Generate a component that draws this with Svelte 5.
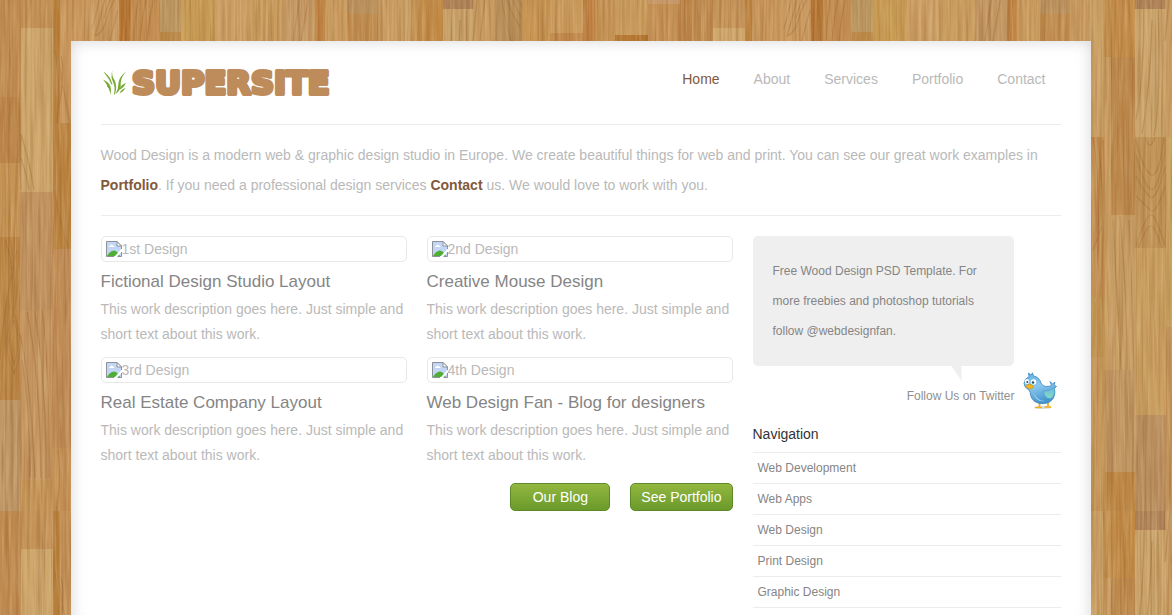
<script>
  const menu = ['Home', 'About', 'Services', 'Portfolio', 'Contact'];

  const works = [
    { alt: '1st Design', title: 'Fictional Design Studio Layout' },
    { alt: '2nd Design', title: 'Creative Mouse Design' },
    { alt: '3rd Design', title: 'Real Estate Company Layout' },
    { alt: '4th Design', title: 'Web Design Fan - Blog for designers' }
  ];

  const topics = ['Web Development', 'Web Apps', 'Web Design', 'Print Design', 'Graphic Design'];

  // Parquet tile, 692 x 521: [x, y, width, height, colour]
  const planks = [
    [0, 0, 21, 107, '#bf8a4f'], [0, 107, 20, 66, '#bb8346'], [0, 173, 20, 74, '#c59352'],
    [0, 247, 20, 163, '#b98341'], [0, 410, 20, 111, '#be9667'],
    [21, 0, 32, 38, '#c39156'], [21, 38, 32, 164, '#cea76c'], [20, 202, 32, 118, '#c1925f'],
    [20, 320, 32, 170, '#c69661'], [20, 490, 33, 31, '#c59455'],
    [53, 0, 7, 133, '#ba7f3a'], [60, 0, 28, 133, '#c8955a'], [53, 133, 35, 126, '#bb823e'],
    [52, 259, 36, 199, '#c08b55'], [53, 458, 35, 63, '#c48f54'],
    [88, 0, 31, 521, '#cb9b61'], [119, 0, 12, 521, '#b5722e'], [131, 0, 29, 521, '#c48d50'],
    [160, 0, 21, 42, '#bb9660'], [160, 42, 21, 479, '#b98644'],
    [181, 0, 34, 521, '#c99c53'], [215, 0, 32, 521, '#cfa167'], [247, 0, 36, 521, '#cb9d5f'],
    [283, 0, 32, 521, '#c59863'], [315, 0, 10, 521, '#bd7f3e'], [325, 0, 23, 521, '#ca9b5e'],
    [348, 0, 30, 24, '#b9905c'], [348, 24, 30, 497, '#bf8a4c'], [378, 0, 21, 521, '#ca9c62'],
    [399, 0, 12, 147, '#cba166'], [399, 147, 14, 160, '#c48f51'], [399, 307, 14, 60, '#c0914f'],
    [399, 367, 14, 154, '#c49558'], [413, 67, 6, 415, '#c99d63'],
    [411, 0, 8, 67, '#c3904e'], [419, 0, 24, 67, '#c28a45'], [419, 67, 24, 158, '#bc874a'],
    [413, 225, 30, 155, '#c89d64'], [413, 380, 30, 102, '#c19662'], [413, 482, 30, 39, '#bd8642'],
    [443, 0, 30, 19, '#ae8057'], [443, 19, 31, 128, '#cba56c'], [443, 147, 31, 111, '#c09256'],
    [443, 258, 31, 167, '#ca9e60'], [443, 425, 31, 96, '#ba8e60'],
    [474, 0, 21, 147, '#c89a60'], [474, 147, 21, 190, '#caa15f'], [474, 337, 21, 184, '#c39159'],
    [495, 0, 27, 521, '#b98e58'], [522, 0, 28, 521, '#c7934f'],
    [550, 0, 33, 43, '#cb9b5b'], [550, 43, 33, 478, '#c2884b'], [583, 0, 12, 521, '#bf8040'],
    [595, 0, 20, 521, '#c79556'], [615, 0, 33, 45, '#ca9c5c'], [615, 45, 33, 476, '#b5752f'],
    [648, 0, 32, 14, '#c99b6c'], [648, 14, 32, 507, '#c58f52'], [680, 0, 12, 521, '#bc8144']
  ];

  // Growth rings and streaks that show on single planks
  const rings = [
    'M101 0q-4 22-9 39M107 0q-6 26-12 46q8-3 11-15T118 3M113 0q-5 15-9 28M118 20q-5 18-8 31',
    'M140 0q-5 24-6 51M148 0q-6 26-8 51M156 0q-7 26-9 51',
    'M516 0q2 10 6 17M511 0q2 14 10 27M506 0q2 20 14 37M501 4q3 22 10 47',
    'M5 250q12 30 5 70M10 250q10 40-1 90M17 260q-14 60-17 110M19 290q-6 40-12 70M14 330q-8 22 0 44q8-22 0-44M14 324q-14 28 0 60q12-30 0-60',
    'M20 344q10 40 15 144M22 370q8 50 8 118M27 322q13 60 14 166M34 320q12 60 12 168M42 320q8 60 7 168',
    'M55 60q6 40 2 73M61 66q5 20-4 60M70 133q-10-50-12-70M54 200q6 34 14 57M58 460q4 30-2 61',
    'M21 200q-2-30 0-56q9 30 13 56M21 168q6 18 8 32',
    'M401 147q10 60 2 160M406 147q8 70 2 160M411 150q3 80-3 157M401 260q10-26 11-30',
    'M444 150q6 26 14 34t14-36M444 165q7 28 14 34t15-38M444 186q8 16 14 21t15-30M444 206q8 8 14 14t15-24M444 256q9-28 14-31t15 31M446 258q8-20 12-22t12 22M453 147q5 16 10 0',
    'M421 230q4 70 8 150M428 226q7 80 7 154M437 230q3 70 5 150',
    'M452 19q-1 80-8 110M460 30q-2 70-10 114M466 20q3 90-4 126',
    'M301 0l-8 51M310 0l-9 51M478 0l-5 51M486 0l-6 51'
  ];
</script>

<svg class="wood" aria-hidden="true">
  <defs>
    <filter id="grain" x="0" y="0" width="100%" height="100%" color-interpolation-filters="sRGB">
      <feTurbulence type="fractalNoise" baseFrequency="0.36 0.008" numOctaves="2" seed="4" />
      <feColorMatrix values="0 0 0 0 .5  0 0 0 0 .3  0 0 0 0 .12  .7 0 0 0 -.27" />
    </filter>
    <filter id="sheen" x="0" y="0" width="100%" height="100%" color-interpolation-filters="sRGB">
      <feTurbulence type="fractalNoise" baseFrequency="0.4 0.02" numOctaves="2" seed="11" />
      <feColorMatrix values="0 0 0 0 .9  0 0 0 0 .78  0 0 0 0 .58  .7 0 0 0 -.27" />
    </filter>
    <pattern id="parquet" width="692" height="521" y="-10" patternUnits="userSpaceOnUse">
      <rect width="692" height="521" fill="#c69558" />
      {#each planks as [x, y, w, h, fill]}
        <rect {x} {y} width={w} height={h} {fill} />
      {/each}
      {#each rings as d}
        <path {d} fill="none" stroke="#94602a" stroke-opacity=".34" stroke-width="1.3" />
      {/each}
    </pattern>
  </defs>
  <rect width="100%" height="100%" fill="url(#parquet)" />
  <rect width="100%" height="100%" filter="url(#grain)" />
  <rect width="100%" height="100%" filter="url(#sheen)" />
</svg>

<div class="page">
  <div class="sheet">
    <header>
      <a class="logo" href="#home" aria-label="Supersite">
        <svg class="grass" viewBox="0 0 24 26" aria-hidden="true">
          <g fill="#78ab31">
            <path d="M9.300 1Q8.500 7 11.500 11Q14.500 17 12 25.500L11 25.500Q12.500 18 10 13Q7.500 8 9.300 1Z" />
            <path d="M23.500 2Q16 8 15.500 14Q15.500 20 12.500 25Q18.500 21 17.700 14Q18 8 23.500 2Z" />
            <path d="M1.500 3.500Q8 8.500 9 15.500Q6.500 10 1.500 3.500Z" stroke="#78ab31" stroke-width=".7" />
            <path d="M0 10.500Q6 13 7.500 17.500Q8.500 21 7.500 26Q7 19 0 10.500Z" />
            <path d="M4 17Q7 18.500 7.500 22Q6.500 19 4 17Z" stroke="#78ab31" stroke-width=".6" />
            <path d="M23 14Q17 16 16 21Q20 19.500 23 14Z" />
            <path d="M22.500 19Q18 20 16.500 24.500Q20.500 23 22.500 19Z" />
          </g>
        </svg>
        <svg class="word" viewBox="0 0 204 30" aria-hidden="true">
          <text x="1" y="26">SUPERSITE</text>
        </svg>
      </a>
      <nav aria-label="Main">
        {#each menu as item, i}
          <a href="#{item.toLowerCase()}" class:active={i === 0}>{item}</a>
        {/each}
      </nav>
    </header>

    <p class="intro">
      Wood Design is a modern web &amp; graphic design studio in Europe. We create beautiful things for
      web and print. You can see our great work examples in <a href="#portfolio">Portfolio</a>. If you
      need a professional design services <a href="#contact">Contact</a> us. We would love to work with
      you.
    </p>

    <div class="columns">
      <main>
        <div class="works">
          {#each works as work}
            <article>
              <div class="thumb">
                <svg viewBox="0 0 16 16" aria-hidden="true">
                  <path d="M.5 .5H11L15.500 5V15.500H.5Z" fill="#c3d6f5" />
                  <path d="M3 6Q3 4.500 4.500 4.500Q5.500 2.500 7 4.500Q8.500 4.500 8.500 6Z" fill="#fff" />
                  <path d="M1 15Q3 11 6 10Q9 8.500 12 12L14 15Z" fill="#4fae34" />
                  <path d="M8 16L16 7.500V10.500L11 16Z" fill="#fff" />
                  <path d="M8 15.500H.5V.5H11L15.500 5V8M15.500 11V15.500H11.500" fill="none" stroke="#8d9199" />
                  <path d="M11 .5V5H15.500Z" fill="#fff" stroke="#8d9199" />
                </svg>
                <span>{work.alt}</span>
              </div>
              <h2>{work.title}</h2>
              <p>This work description goes here. Just simple and short text about this work.</p>
            </article>
          {/each}
        </div>
        <div class="actions">
          <a class="button" href="#blog">Our Blog</a>
          <a class="button" href="#portfolio">See Portfolio</a>
        </div>
      </main>

      <aside>
        <div class="bubble">
          Free Wood Design PSD Template. For more freebies and photoshop tutorials follow @webdesignfan.
        </div>
        <a class="follow" href="#twitter">
          <span>Follow Us on Twitter</span>
          <svg viewBox="0 0 34 38" aria-hidden="true">
            <defs>
              <linearGradient id="body" x1="0" y1="0" x2=".3" y2="1">
                <stop offset="0" stop-color="#5fb0e0" />
                <stop offset=".5" stop-color="#8cc9ee" />
                <stop offset="1" stop-color="#4595cf" />
              </linearGradient>
              <linearGradient id="wing" x1="0" y1="0" x2="0" y2="1">
                <stop offset="0" stop-color="#6db9e4" />
                <stop offset="1" stop-color="#86dcc0" />
              </linearGradient>
            </defs>
            <ellipse cx="20" cy="35.500" rx="9" ry="1.500" fill="#ddd" />
            <path d="M16.500 30V35M25 30V34.500" stroke="#eeb01c" stroke-width="1.800" />
            <path d="M12 35.500H19M21.500 35H28" stroke="#eeb01c" stroke-width="1.500" />
            <path
              d="M6 4.500L5.500 1L8 3L9.500 .8L10.500 4Q15 4.500 17 8.500Q18.500 14 23 14.500Q27 14.500 28.500 13.500L27 9.500L29.500 12L32 10L31 13L33.500 14.500L31.500 16.500Q33 24 28.500 28.500Q24 32.500 17 31.500Q9 30 7.500 23Q7.500 20 6 18Q1.500 16 1 11.500Q1.500 6.500 6 4.500Z"
              fill="url(#body)" stroke="#3d87bd" stroke-width=".8"
            />
            <path d="M10 20Q14 29 22 29Q13 31 10 20Z" fill="#b9e3f8" opacity=".8" />
            <path d="M20 19Q26 20 31 15.500Q33 23 28 26.500Q22 27.500 20 19Z" fill="url(#wing)" stroke="#4a9dc9" stroke-width=".7" />
            <ellipse cx="4" cy="9.500" rx="2.200" ry="2.600" fill="#fff" />
            <ellipse cx="10.500" cy="10" rx="2.800" ry="2.800" fill="#fff" />
            <circle cx="4.300" cy="10" r="1" fill="#254b68" />
            <circle cx="10" cy="10.500" r="1.200" fill="#254b68" />
            <path d="M2.500 14Q6 10.500 11 14Q9.500 17.500 6.500 17Q4.500 16.500 2.500 14Z" fill="#f0b41d" stroke="#c98a10" stroke-width=".5" />
          </svg>
        </a>
        <h3>Navigation</h3>
        <ul>
          {#each topics as topic}
            <li><a href="#{topic.toLowerCase().replace(' ', '-')}">{topic}</a></li>
          {/each}
        </ul>
      </aside>
    </div>
  </div>
</div>

<style>
  :global(body) {
    background: #c69558;
    overflow: hidden;
  }

  .wood {
    position: fixed;
    inset: 0;
    width: 100%;
    height: 100%;
  }

  .page {
    position: relative;
    padding: 41px 11px 0 0;
    font: 14px/25px 'Liberation Sans', Arial, sans-serif;
    color: #b9b9b9;
  }

  .sheet {
    box-sizing: border-box;
    max-width: 1020px;
    min-height: calc(100vh - 41px);
    margin: 0 auto;
    padding: 0 30px 20px;
    background: #fff;
    box-shadow: inset 0 0 15px rgba(0, 0, 0, 0.17);
  }

  a {
    color: inherit;
    text-decoration: none;
  }

  h2,
  h3,
  p,
  ul {
    margin: 0;
    padding: 0;
    font-weight: normal;
  }

  header {
    display: flex;
    justify-content: space-between;
    height: 83px;
    border-bottom: 1px solid #ececec;
  }

  .logo {
    display: flex;
    gap: 4px;
    padding: 27px 0 0 2px;
  }

  .grass {
    width: 24px;
    height: 28px;
  }

  .word {
    width: 204px;
    height: 30px;
    overflow: visible;
  }

  .word text {
    font: bold 32px 'DejaVu Sans', sans-serif;
    fill: #be8b5b;
    stroke: #be8b5b;
    stroke-width: 4px;
    stroke-linejoin: round;
  }

  nav {
    display: flex;
    gap: 34px;
    padding: 26px 15px 0 0;
  }

  nav .active {
    color: #81593a;
  }

  .intro {
    padding: 15px 0;
    line-height: 30px;
    border-bottom: 1px solid #ececec;
  }

  .intro a {
    font-weight: bold;
    color: #81593a;
  }

  .columns {
    display: grid;
    grid-template-columns: 632fr 308fr;
    gap: 20px;
    padding-top: 20px;
  }

  .works {
    display: grid;
    grid-template-columns: 1fr 1fr;
    gap: 10px 20px;
  }

  .thumb {
    display: flex;
    align-items: center;
    height: 24px;
    padding-left: 4px;
    border: 1px solid #e8e8e8;
    border-radius: 5px;
  }

  .thumb svg {
    width: 16px;
    height: 16px;
  }

  h2 {
    padding: 7px 0 3px;
    font-size: 17px;
    line-height: 25px;
    color: #858585;
  }

  .actions {
    display: flex;
    justify-content: flex-end;
    gap: 20px;
    padding-top: 15px;
  }

  .button {
    box-sizing: border-box;
    min-width: 100px;
    padding: 0 10px;
    border: 1px solid #5d8a26;
    border-radius: 5px;
    background: linear-gradient(#93b740, #6a9a2b);
    color: #fff;
    line-height: 26px;
    text-align: center;
  }

  .bubble {
    position: relative;
    box-sizing: border-box;
    max-width: 261px;
    padding: 20px;
    border-radius: 5px;
    background: #efefef;
    color: #858585;
    font-size: 12px;
    line-height: 30px;
  }

  .bubble::after {
    content: '';
    position: absolute;
    top: 100%;
    right: 52px;
    width: 10px;
    height: 15px;
    background: #efefef;
    clip-path: polygon(0 0, 100% 0, 100% 100%);
  }

  .follow {
    display: flex;
    justify-content: flex-end;
    align-items: center;
    gap: 8px;
    padding: 6px 4px 0 0;
    font-size: 12px;
    color: #8f8f8f;
  }

  .follow span {
    padding-top: 10px;
  }

  .follow svg {
    width: 34px;
    height: 38px;
  }

  h3 {
    padding-top: 12px;
    padding-bottom: 5px;
    font-size: 14px;
    line-height: 25px;
    color: #333;
  }

  ul {
    list-style: none;
    border-top: 1px solid #ececec;
  }

  li {
    padding-left: 5px;
    border-bottom: 1px solid #ececec;
    font-size: 12px;
    line-height: 30px;
    color: #858585;
  }
</style>
